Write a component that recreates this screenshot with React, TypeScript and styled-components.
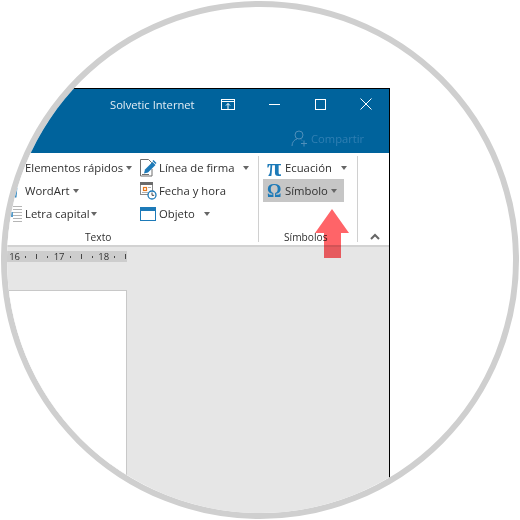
import { FC, ReactNode } from "react";
import styled, { createGlobalStyle } from "styled-components";

const GlobalStyle = createGlobalStyle`
    html, body {
        margin: 0;
        padding: 0;
        background: #fff;
    }
    body {
        font-family: "Open Sans", "Noto Sans", "Liberation Sans", sans-serif;
    }
`;

const Stage = styled.div`
    width: 520px;
    height: 520px;
    padding: 1px;
    box-sizing: border-box;
`;

const Circle = styled.div`
    position: relative;
    width: 518px;
    height: 518px;
    box-sizing: border-box;
    border: 6px solid #cfcfcf;
    border-radius: 50%;
    overflow: hidden;
    background: #fff;
    padding-top: 81px;
`;

const Window = styled.div`
    width: 383px;
    height: 430px;
    box-sizing: border-box;
    border-top: 1px solid #000;
    border-right: 1px solid #000;
    display: flex;
    flex-direction: column;
    background: #e6e6e6;
`;

const TitleBar = styled.div`
    height: 64px;
    background: #00639c;
    color: #fff;
    display: flex;
    flex-direction: column;
    flex: none;
`;

const TitleRow = styled.div`
    height: 30px;
    display: flex;
    align-items: center;
    padding-left: 103px;
`;

const TitleText = styled.span`
    font-size: 11.2px;
    width: 95px;
    white-space: nowrap;
    color: #e4eef5;
`;

const WindowButton = styled.span`
    display: flex;
    align-items: center;
    justify-content: center;
    width: 46px;
    height: 30px;
`;

const ShareRow = styled.div`
    height: 34px;
    box-sizing: border-box;
    padding: 4px 0 0 284px;
    display: flex;
    align-items: center;
    gap: 3px;
    color: #2f7fb3;
    font-size: 11.2px;
`;

const Ribbon = styled.div`
    height: 89px;
    flex: none;
    background: #fff;
    border-bottom: 2px solid #d2d2d2;
    display: flex;
    padding-top: 3px;
`;

const Group = styled.div<{ $width: number }>`
    width: ${(p) => p.$width}px;
    height: 86px;
    box-sizing: border-box;
    border-right: 1px solid #d0d0d0;
    display: flex;
    flex-direction: column;
    flex: none;
`;

const GroupBody = styled.div`
    height: 76px;
    display: flex;
`;

const GroupLabel = styled.div<{ $left: number }>`
    font-size: 10.2px;
    line-height: 10px;
    color: #303030;
    padding-left: ${(p) => p.$left}px;
    white-space: nowrap;
`;

const Column = styled.div<{ $width: number }>`
    width: ${(p) => p.$width}px;
    display: flex;
    flex-direction: column;
    flex: none;
`;

const Command = styled.div<{ $active?: boolean; $inset?: number }>`
    height: 23px;
    display: flex;
    align-items: center;
    margin-left: ${(p) => p.$inset ?? 0}px;
    width: ${(p) => (p.$active ? "81px" : "auto")};
    background: ${(p) => (p.$active ? "#c6c6c6" : "transparent")};
    color: #303030;
    font-size: 11.3px;
    white-space: nowrap;
`;

const IconSlot = styled.span<{ $width: number }>`
    width: ${(p) => p.$width}px;
    flex: none;
    display: flex;
    align-items: center;
    justify-content: flex-start;
`;

const Caret = styled.span<{ $gap: number }>`
    width: 0;
    height: 0;
    margin-left: ${(p) => p.$gap}px;
    border-left: 3.5px solid transparent;
    border-right: 3.5px solid transparent;
    border-top: 4px solid #666;
`;

const MathGlyph = styled.span<{ $size: number; $shift: number }>`
    font-family: "Liberation Serif", "DejaVu Serif", serif;
    font-weight: 700;
    font-size: ${(p) => p.$size}px;
    line-height: 1;
    color: #1d7ab8;
    margin-left: ${(p) => p.$shift}px;
`;

const CollapseSlot = styled.div`
    height: 86px;
    box-sizing: border-box;
    flex: 1;
    display: flex;
    align-items: flex-end;
    padding: 0 0 2px 12px;
`;

const Workspace = styled.div`
    flex: 1;
    padding-top: 4px;
`;

const Ruler = styled.div`
    width: 120px;
    height: 11px;
    box-sizing: border-box;
    padding-left: 2px;
    background: #cdcdcd;
    display: flex;
    overflow: hidden;
`;

const RulerCell = styled.span`
    width: 11.15px;
    flex: none;
    display: flex;
    align-items: center;
    justify-content: center;
    font-size: 9.5px;
    color: #303030;
`;

const RulerDot = styled.i`
    width: 1px;
    height: 2px;
    background: #444;
`;

const RulerTick = styled.i`
    width: 1px;
    height: 5px;
    background: #444;
`;

const Page = styled.div`
    width: 120px;
    height: 300px;
    margin-top: 28px;
    background: #fff;
    box-sizing: border-box;
    border-top: 1px solid #c8c8c8;
    border-right: 1px solid #c8c8c8;
`;

const Arrow = styled.svg`
    position: absolute;
    left: 308px;
    top: 202px;
    mix-blend-mode: multiply;
`;

const rulerMarks = ["16", ".", "|", ".", "17", ".", "|", ".", "18", ".", "|"];

const RulerMarks: FC = () => (
    <Ruler>
        {rulerMarks.map((mark, i) => (
            <RulerCell key={i}>
                {mark === "." && <RulerDot />}
                {mark === "|" && <RulerTick />}
                {mark !== "." && mark !== "|" && mark}
            </RulerCell>
        ))}
    </Ruler>
);

const LetterIcon: FC = () => (
    <svg width="16" height="20" viewBox="0 0 16 20">
        <path
            d="M6 2.500h9M6 5.500h9M6 8.500h9M6 11.500h9M6 14.500h9M6 17.500h9"
            stroke="#b5b5b5"
            strokeWidth="1"
        />
        <path d="M5 8v5" stroke="#1d7ab8" strokeWidth="1.500" />
    </svg>
);

const WordArtIcon: FC = () => (
    <svg width="14" height="18" viewBox="0 0 14 18">
        <path d="M9.500 5.500l-1 10" stroke="#1d7ab8" strokeWidth="1.800" fill="none" />
    </svg>
);

const SignatureIcon: FC = () => (
    <svg width="17" height="18" viewBox="0 0 17 18">
        <path d="M0.500 0.500h8l3 3V6M12 10v7H0.500V0.500" fill="none" stroke="#6f6f6f" strokeWidth="1" />
        <path d="M4 14.500l1-4 7.500-7.500 3 3-7.500 7.500z" fill="#1d7ab8" />
        <path d="M13 1.500l3 3" stroke="#1d7ab8" strokeWidth="1.500" />
        <path d="M2 15.500h7" stroke="#6f6f6f" strokeWidth="1" />
    </svg>
);

const DateIcon: FC = () => (
    <svg width="17" height="18" viewBox="0 0 17 18">
        <rect x="0.500" y="0.500" width="12" height="12" fill="#fff" stroke="#8a8a8a" />
        <path d="M0 0h13v3H0z" fill="#6b6b6b" />
        <path d="M8 5.500h3M2 10.500h6" stroke="#b0b0b0" strokeWidth="1" />
        <rect x="3.500" y="5.500" width="3" height="3" fill="#fff" stroke="#e8791e" strokeWidth="1.200" />
        <circle cx="12" cy="13" r="4" fill="#fff" stroke="#1d7ab8" strokeWidth="1.300" />
        <path d="M12 10.500v2.800h2.200" fill="none" stroke="#444" strokeWidth="1" />
    </svg>
);

const ObjectIcon: FC = () => (
    <svg width="16" height="14" viewBox="0 0 16 14">
        <rect x="0.500" y="0.500" width="15" height="13" fill="#fff" stroke="#1d7ab8" />
        <rect x="0" y="0" width="16" height="4" fill="#1d7ab8" />
    </svg>
);

const RibbonDisplayIcon: FC = () => (
    <svg width="14" height="11" viewBox="0 0 14 11">
        <rect x="0.500" y="0.500" width="13" height="10" fill="none" stroke="#fff" />
        <path d="M0 2.500h14" stroke="#fff" />
        <path d="M7 10V4.500M5 6.500l2-2 2 2" fill="none" stroke="#fff" />
    </svg>
);

const MinimizeIcon: FC = () => (
    <svg width="11" height="3" viewBox="0 0 11 3">
        <path d="M0 1.500h11" stroke="#fff" />
    </svg>
);

const MaximizeIcon: FC = () => (
    <svg width="11" height="11" viewBox="0 0 11 11">
        <rect x="0.500" y="0.500" width="10" height="10" fill="none" stroke="#fff" />
    </svg>
);

const CloseIcon: FC = () => (
    <svg width="12" height="12" viewBox="0 0 12 12">
        <path d="M0.500 0.500l11 11M11.500 0.500l-11 11" stroke="#fff" />
    </svg>
);

const ShareIcon: FC = () => (
    <svg width="17" height="17" viewBox="0 0 17 17">
        <circle cx="8" cy="5" r="4" fill="none" stroke="#4f8fba" />
        <path d="M1 16c0-4 2.500-6.500 5-7M10 9.500l1 1" fill="none" stroke="#4f8fba" />
        <path d="M13 10.500v6M10 13.500h6" stroke="#4f8fba" />
    </svg>
);

const ChevronIcon: FC = () => (
    <svg width="10" height="7" viewBox="0 0 10 7">
        <path d="M1 6l4-4 4 4" fill="none" stroke="#666" strokeWidth="2" />
    </svg>
);

type RowProps = {
    icon: ReactNode;
    label: string;
    slot?: number;
    gap?: number;
};

const CommandRow: FC<RowProps> = ({ icon, label, slot = 18, gap }) => (
    <Command>
        <IconSlot $width={slot}>{icon}</IconSlot>
        {label}
        {gap !== undefined && <Caret $gap={gap} />}
    </Command>
);

const App: FC = () => (
    <>
        <GlobalStyle />
        <Stage>
            <Circle>
                <Window>
                    <TitleBar>
                        <TitleRow>
                            <TitleText>Solvetic Internet</TitleText>
                            <WindowButton>
                                <RibbonDisplayIcon />
                            </WindowButton>
                            <WindowButton>
                                <MinimizeIcon />
                            </WindowButton>
                            <WindowButton>
                                <MaximizeIcon />
                            </WindowButton>
                            <WindowButton>
                                <CloseIcon />
                            </WindowButton>
                        </TitleRow>
                        <ShareRow>
                            <ShareIcon />
                            Compartir
                        </ShareRow>
                    </TitleBar>
                    <Ribbon>
                        <Group $width={252}>
                            <GroupBody>
                                <Column $width={133}>
                                    <CommandRow icon={null} label="Elementos rápidos" gap={3} />
                                    <CommandRow icon={<WordArtIcon />} label="WordArt" gap={3} />
                                    <CommandRow icon={<LetterIcon />} label="Letra capital" gap={1} />
                                </Column>
                                <Column $width={118}>
                                    <CommandRow icon={<SignatureIcon />} slot={19} label="Línea de firma" gap={9} />
                                    <CommandRow icon={<DateIcon />} slot={19} label="Fecha y hora" />
                                    <CommandRow icon={<ObjectIcon />} slot={19} label="Objeto" gap={9} />
                                </Column>
                            </GroupBody>
                            <GroupLabel $left={78}>Texto</GroupLabel>
                        </Group>
                        <Group $width={99}>
                            <GroupBody>
                                <Column $width={98}>
                                    <Command $inset={8}>
                                        <IconSlot $width={18}>
                                            <MathGlyph $size={26} $shift={0}>π</MathGlyph>
                                        </IconSlot>
                                        Ecuación
                                        <Caret $gap={9} />
                                    </Command>
                                    <Command $inset={4} $active>
                                        <IconSlot $width={22}>
                                            <MathGlyph $size={18} $shift={4}>Ω</MathGlyph>
                                        </IconSlot>
                                        Símbolo
                                        <Caret $gap={3} />
                                    </Command>
                                </Column>
                            </GroupBody>
                            <GroupLabel $left={25}>Símbolos</GroupLabel>
                        </Group>
                        <CollapseSlot>
                            <ChevronIcon />
                        </CollapseSlot>
                    </Ribbon>
                    <Workspace>
                        <RulerMarks />
                        <Page />
                    </Workspace>
                </Window>
                <Arrow width="34" height="49" viewBox="0 0 34 49">
                    <path d="M17 0L34 24H26V49H9V24H0Z" fill="#ff6468" />
                </Arrow>
            </Circle>
        </Stage>
    </>
);

export default App;
